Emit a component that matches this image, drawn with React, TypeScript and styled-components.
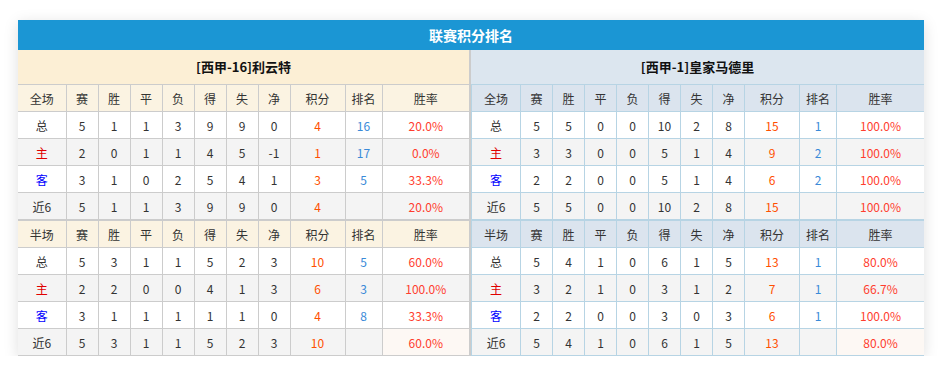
import React from 'react';
import styled, { createGlobalStyle } from 'styled-components';

type Side = 'home' | 'away'

type RowType = {
    label: string
    cells: string[]
    points: string
    rank: string
    rate: string
}

type PanelType = {
    side: Side
    team: string
    full: RowType[]
    half: RowType[]
}

const theme = {
    home: { team: '#fcefd5', head: '#fbf3e2', line: '#cccccc' },
    away: { team: '#dce6ef', head: '#dbe4ee', line: '#b7d4e4' },
}

const GlobalStyle = createGlobalStyle`
    body {
        margin: 0;
        background: #ffffff;
        font-family: "Noto Sans CJK SC", "Noto Sans", sans-serif;
        font-size: 12px;
        color: #333333;
    }
`

const row = (label: string, list: string): RowType => {
    const p = list.split(' ')
    return { label, cells: p.slice(0, 7), points: p[7], rank: p[8] === '-' ? '' : p[8], rate: p[9] }
}

const panels: PanelType[] = [
    {
        side: 'home',
        team: '[西甲-16]利云特',
        full: [
            row('总', '5 1 1 3 9 9 0 4 16 20.0%'),
            row('主', '2 0 1 1 4 5 -1 1 17 0.0%'),
            row('客', '3 1 0 2 5 4 1 3 5 33.3%'),
            row('近6', '5 1 1 3 9 9 0 4 - 20.0%'),
        ],
        half: [
            row('总', '5 3 1 1 5 2 3 10 5 60.0%'),
            row('主', '2 2 0 0 4 1 3 6 3 100.0%'),
            row('客', '3 1 1 1 1 1 0 4 8 33.3%'),
            row('近6', '5 3 1 1 5 2 3 10 - 60.0%'),
        ],
    },
    {
        side: 'away',
        team: '[西甲-1]皇家马德里',
        full: [
            row('总', '5 5 0 0 10 2 8 15 1 100.0%'),
            row('主', '3 3 0 0 5 1 4 9 2 100.0%'),
            row('客', '2 2 0 0 5 1 4 6 2 100.0%'),
            row('近6', '5 5 0 0 10 2 8 15 - 100.0%'),
        ],
        half: [
            row('总', '5 4 1 0 6 1 5 13 1 80.0%'),
            row('主', '3 2 1 0 3 1 2 7 1 66.7%'),
            row('客', '2 2 0 0 3 0 3 6 1 100.0%'),
            row('近6', '5 4 1 0 6 1 5 13 - 80.0%'),
        ],
    },
]

const heads = ['赛', '胜', '平', '负', '得', '失', '净', '积分', '排名', '胜率']

const Block = ({ side, title, rows, first }: { side: Side, title: string, rows: RowType[], first: boolean }) => (
    <>
        <HeadRow side={side} thick={!first}>
            <HeadCell>{title}</HeadCell>
            {heads.map(h => <HeadCell key={h}>{h}</HeadCell>)}
        </HeadRow>
        {rows.map((r, i) => (
            <BodyRow key={r.label} even={i % 2 === 1} side={side}>
                <LabelCell kind={r.label}>{r.label}</LabelCell>
                {r.cells.map((c, j) => <Cell key={j}>{c}</Cell>)}
                <PointsCell>{r.points}</PointsCell>
                <RankCell>{r.rank}</RankCell>
                <RateCell soft={!first && i === rows.length - 1}>{r.rate}</RateCell>
            </BodyRow>
        ))}
    </>
)

const Panel = ({ side, team, full, half }: PanelType) => (
    <StyledPanel side={side}>
        <TeamName side={side}>{team}</TeamName>
        <Table side={side}>
            <colgroup>
                <col style={{ width: side === 'home' ? 48 : 49 }}/>
                {[0, 1, 2, 3, 4, 5, 6].map(i => <col key={i} style={{ width: 32 }}/>)}
                <col style={{ width: 55 }}/>
                <col style={{ width: 37 }}/>
                <col/>
            </colgroup>
            <tbody>
                <Block side={side} title="全场" rows={full} first={true}/>
                <Block side={side} title="半场" rows={half} first={false}/>
            </tbody>
        </Table>
    </StyledPanel>
)

export default function App() {
    return (
        <>
            <GlobalStyle/>
            <Card>
                <Title>联赛积分排名</Title>
                <Panels>
                    {panels.map(p => <Panel key={p.side} {...p}/>)}
                </Panels>
            </Card>
        </>
    );
}

const Card = styled.div`
    width: 906px;
    margin: 20px 0 0 18px;
    background: #ffffff;
    box-shadow: 0 3px 14px rgba(0, 0, 0, 0.13);
`

const Title = styled.div`
    height: 30px;
    line-height: 30px;
    background: #1b96d4;
    color: #ffffff;
    font-size: 14px;
    font-weight: bold;
    text-align: center;
`

const Panels = styled.div`
    display: flex;
`

const StyledPanel = styled.div<{ side: Side }>`
    flex: 0 0 ${p => p.side === 'home' ? '453px' : '453px'};
    border-right: ${p => p.side === 'home' ? '2px solid #cccccc' : 'none'};
    box-sizing: border-box;
`

const TeamName = styled.div<{ side: Side }>`
    height: 34px;
    line-height: 34px;
    background: ${p => theme[p.side].team};
    border-bottom: 1px solid ${p => theme[p.side].line};
    text-align: center;
    font-size: 13px;
    font-weight: bold;
    color: #111111;
`

const Table = styled.table<{ side: Side }>`
    width: 100%;
    border-collapse: collapse;
    table-layout: fixed;

    td {
        border: 1px solid ${p => theme[p.side].line};
        height: 26px;
        padding: 0;
        text-align: center;
        white-space: nowrap;
    }

    td:first-child {
        border-left: ${p => p.side === 'home' ? 'none' : `1px solid ${theme.away.line}`};
    }

    td:last-child {
        border-right: none;
    }

    tr:first-child td {
        border-top: none;
    }
`

const HeadRow = styled.tr<{ side: Side, thick: boolean }>`
    background: ${p => theme[p.side].head};

    td {
        height: 26px;
        border-top: ${p => p.thick ? `2px solid ${theme[p.side].line}` : 'none'};
    }
`

const HeadCell = styled.td`
    color: #333333;
`

const BodyRow = styled.tr<{ even: boolean, side: Side }>`
    background: ${p => p.even ? '#f4f4f4' : '#ffffff'};
`

const Cell = styled.td`
    color: #333333;
`

const LabelCell = styled.td<{ kind: string }>`
    color: ${p => p.kind === '主' ? '#e00000' : p.kind === '客' ? '#0000ff' : '#333333'};
`

const PointsCell = styled.td`
    color: #ff5000;
`

const RankCell = styled.td`
    color: #3a8ad8;
`

const RateCell = styled.td<{ soft: boolean }>`
    color: #ff3d2e;
    background: ${p => p.soft ? '#fdf8f4' : 'inherit'};
`
